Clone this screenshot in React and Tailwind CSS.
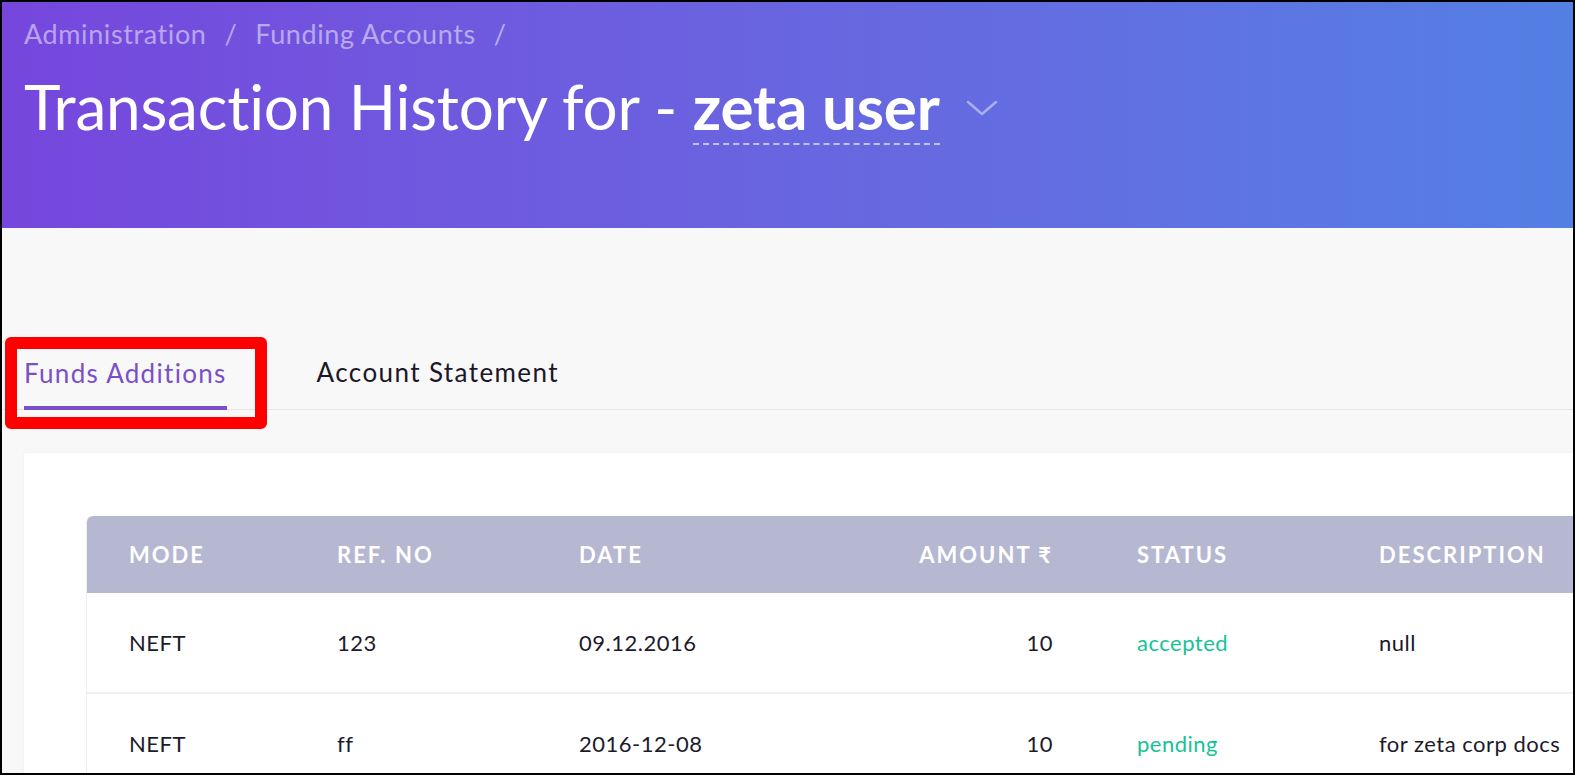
const COLS = 'grid grid-cols-[208px_242px_324px_234px_242px_1fr]';

const ROWS = [
  { mode: 'NEFT', ref: '123', date: '09.12.2016', amount: '10', status: 'accepted', desc: 'null' },
  { mode: 'NEFT', ref: 'ff', date: '2016-12-08', amount: '10', status: 'pending', desc: 'for zeta corp docs' },
];

function HeaderCell({ children, right }) {
  return (
    <div className={`px-[42px] flex items-center gap-2 ${right ? 'justify-end' : ''}`}>
      {children}
    </div>
  );
}

export default function App() {
  return (
    <div className="w-[1575px] h-[775px] border-2 border-black overflow-hidden bg-[#f8f8f8] relative font-['Lato','Open_Sans',sans-serif]">
      {/* Header */}
      <div className="h-[226px] bg-gradient-to-r from-[#7646dd] to-[#537fe3] pl-[22px] pt-[16px]">
        <div className="flex items-center gap-[18px] text-[27px] tracking-[0.6px] text-white/50 leading-[32px]">
          <span>Administration</span>
          <span>/</span>
          <span>Funding Accounts</span>
          <span>/</span>
        </div>
        <div className="flex items-center mt-[24px]">
          <h1 className="text-[62px] text-white leading-[64px] tracking-[-0.2px]">
            Transaction History for -{' '}
            <span className="font-bold border-b-2 border-dashed border-white/60">zeta user</span>
          </h1>
          <svg className="ml-[26px] mt-[4px]" width="32" height="18" viewBox="0 0 32 18" fill="none">
            <polyline points="2,3 16,15 30,3" stroke="rgba(255,255,255,0.45)" strokeWidth="2.5" strokeLinecap="round" strokeLinejoin="round" />
          </svg>
        </div>
      </div>

      {/* Tabs */}
      <div className="mt-[129px] flex items-end gap-[90px] border-b border-[#e6e6e6] pl-[22px]">
        <div className="text-[26px] tracking-[1.3px] text-[#7a50c8] leading-[30px] pb-[18px] border-b-4 border-[#7a50c8] -mb-px">
          Funds Additions
        </div>
        <div className="text-[26px] tracking-[1.4px] text-[#1b1628] leading-[30px] pb-[22px]">Account Statement</div>
      </div>

      {/* Card */}
      <div className="ml-[22px] mt-[43px] w-[1620px] bg-white pt-[63px] pl-[63px] shadow-[0_0_2px_rgba(0,0,0,0.06)]">
        <div className="rounded-tl-[6px] overflow-hidden shadow-[-1px_0_0_#eeeeee]">
          <div className={`${COLS} h-[77px] bg-[#b6b8d1] text-white font-bold text-[22px] tracking-[2px]`}>
            <HeaderCell>MODE</HeaderCell>
            <HeaderCell>REF. NO</HeaderCell>
            <HeaderCell>DATE</HeaderCell>
            <HeaderCell right>AMOUNT ₹</HeaderCell>
            <HeaderCell>STATUS</HeaderCell>
            <HeaderCell>DESCRIPTION</HeaderCell>
          </div>
          {ROWS.map((r, i) => (
            <div key={i} className={`${COLS} h-[101px] border-b-2 border-[#f0f0f2] text-[22px] tracking-[0.5px] text-[#1c1a2b]`}>
              <div className="px-[42px] flex items-center">{r.mode}</div>
              <div className="px-[42px] flex items-center">{r.ref}</div>
              <div className="px-[42px] flex items-center">{r.date}</div>
              <div className="px-[42px] flex items-center justify-end">{r.amount}</div>
              <div className="px-[42px] flex items-center text-[#17c297]">{r.status}</div>
              <div className="px-[42px] flex items-center whitespace-nowrap">{r.desc}</div>
            </div>
          ))}
        </div>
      </div>

      {/* Highlight annotation */}
      <div className="absolute left-[3px] top-[335px] w-[262px] h-[92px] border-[12px] border-[#ff0000] rounded-[6px]" />
    </div>
  );
}
